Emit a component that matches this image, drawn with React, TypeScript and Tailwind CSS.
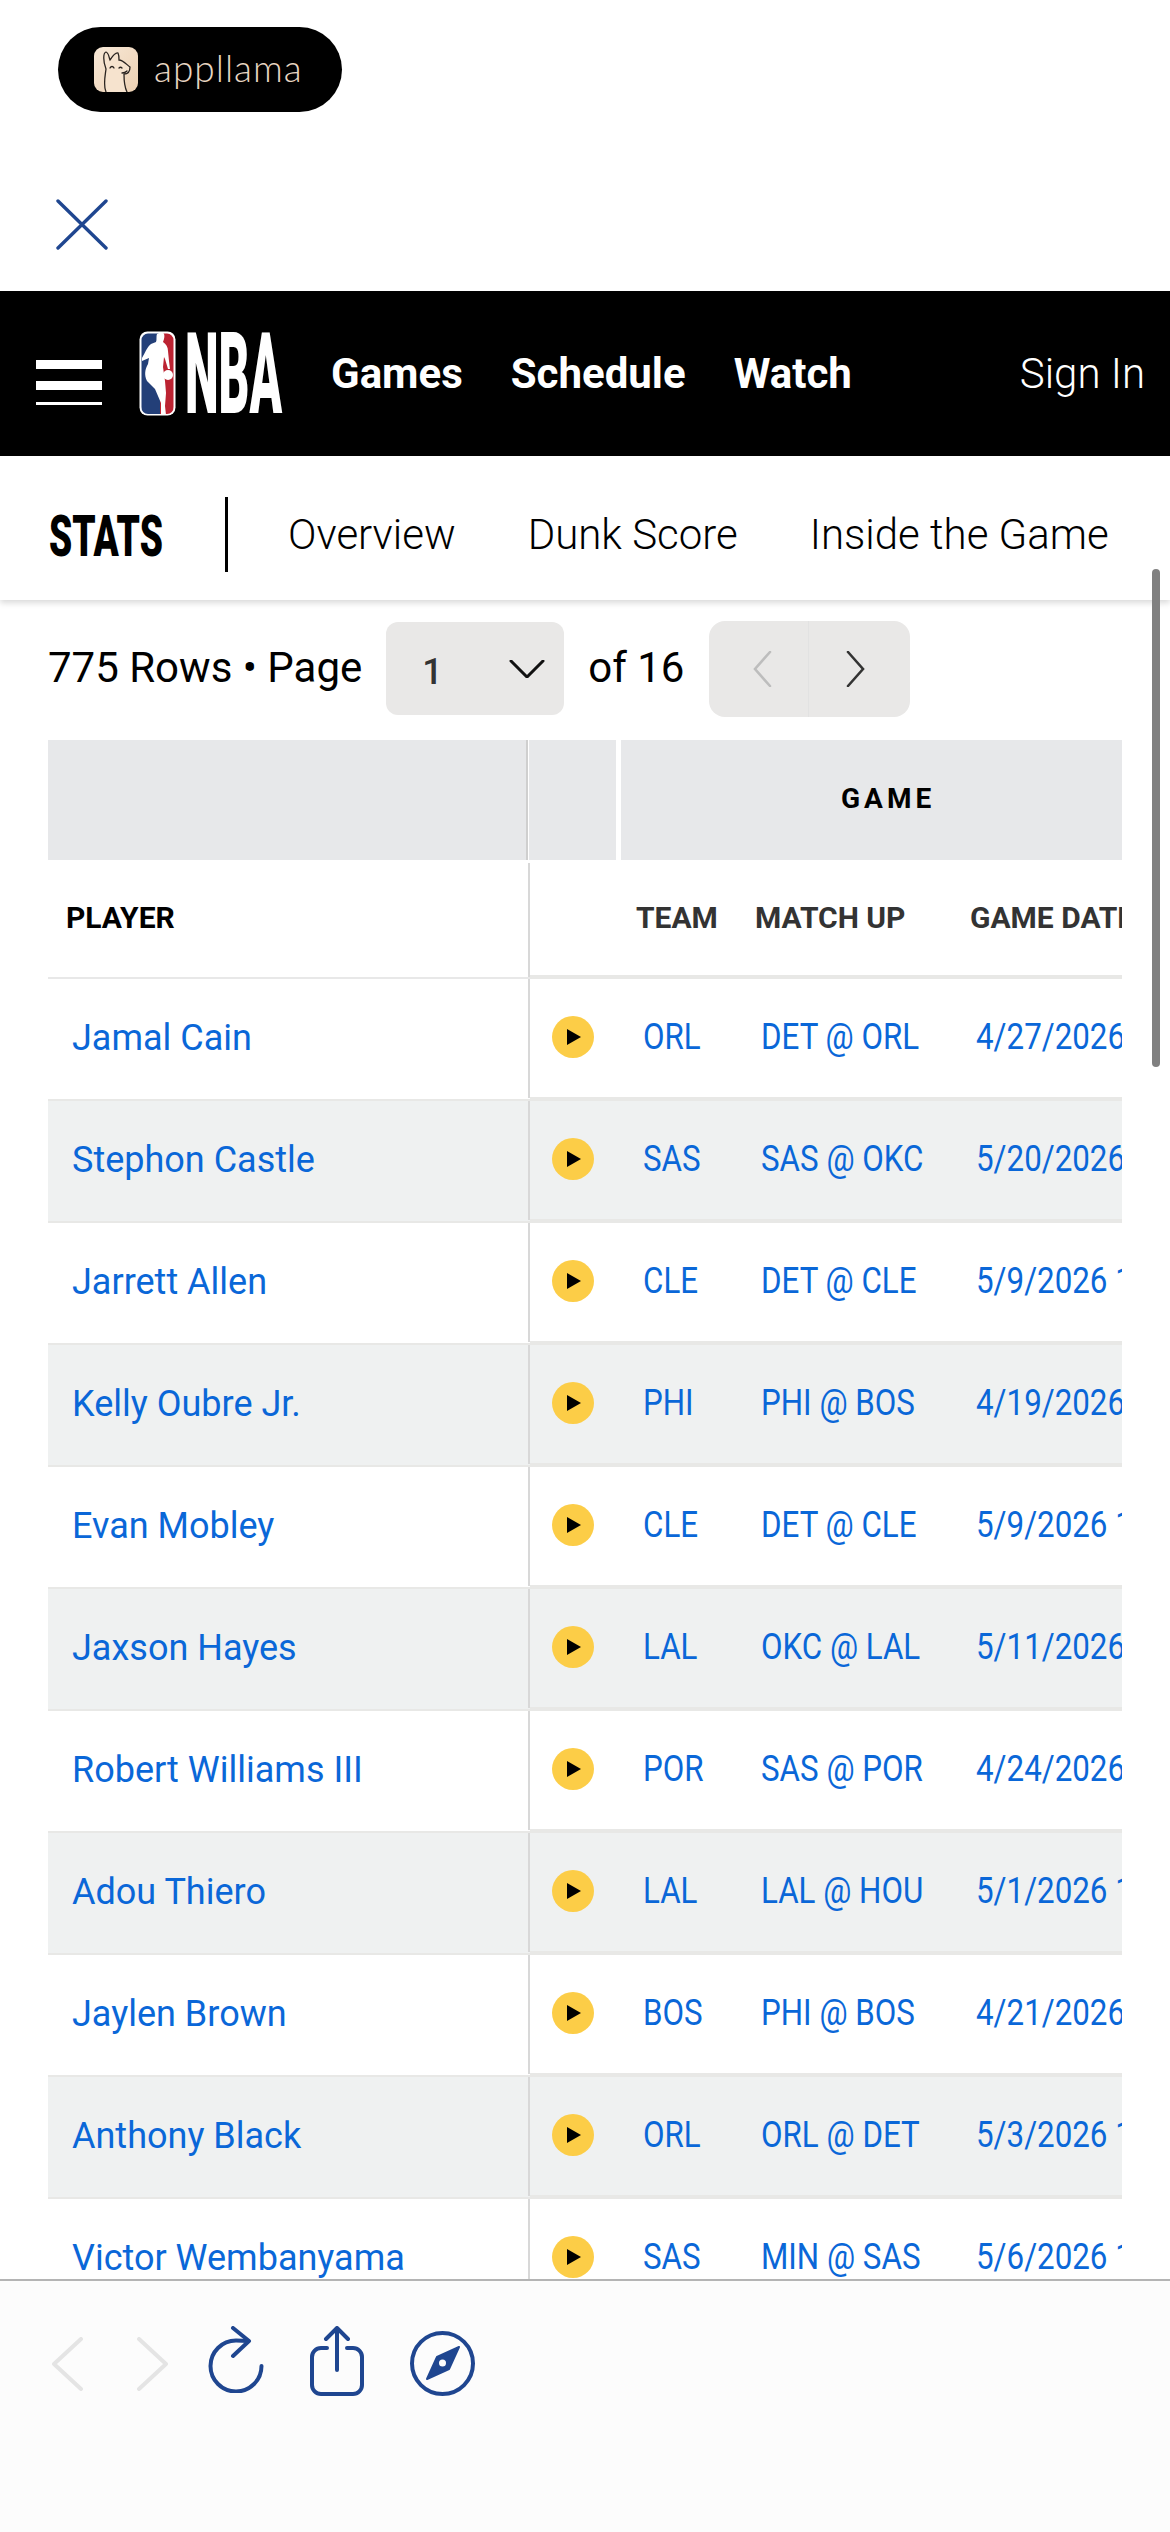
const rows = [
  ["Jamal Cain", "ORL", "DET @ ORL", "4/27/2026 7:30 PM"],
  ["Stephon Castle", "SAS", "SAS @ OKC", "5/20/2026 8:30 PM"],
  ["Jarrett Allen", "CLE", "DET @ CLE", "5/9/2026 1:00 PM"],
  ["Kelly Oubre Jr.", "PHI", "PHI @ BOS", "4/19/2026 6:00 PM"],
  ["Evan Mobley", "CLE", "DET @ CLE", "5/9/2026 1:00 PM"],
  ["Jaxson Hayes", "LAL", "OKC @ LAL", "5/11/2026 9:30 PM"],
  ["Robert Williams III", "POR", "SAS @ POR", "4/24/2026 9:00 PM"],
  ["Adou Thiero", "LAL", "LAL @ HOU", "5/1/2026 1:00 PM"],
  ["Jaylen Brown", "BOS", "PHI @ BOS", "4/21/2026 7:00 PM"],
  ["Anthony Black", "ORL", "ORL @ DET", "5/3/2026 1:00 PM"],
  ["Victor Wembanyama", "SAS", "MIN @ SAS", "5/6/2026 1:00 PM"],
];

function Llama() {
  return (
    <div className="w-[44px] h-[45px] rounded-[9px] bg-gradient-to-br from-[#f8e9d8] to-[#ecd0b2] overflow-hidden">
      <svg viewBox="0 0 44 45" className="w-full h-full" fill="none" stroke="#2a2420" strokeWidth="1.3" strokeLinecap="round">
        <path d="M12 45 C9 38 11 30 12 22 C9 14 9 6 12 5 C15 6 15 11 16 13 C18 10 21 5 24 6 C25 8 25 10 25 13 C29 13 33 18 36 20 C36 24 34 27 30 27 C30 32 30 39 33 45" fill="#f6e3ce" />
        <path d="M16 21 C17 19 19 19 20 21 M25 21 C26 20 27 20 28 21" />
        <path d="M28 26 C30 26 32 25 33 24" />
      </svg>
    </div>
  );
}

function NbaLogo() {
  return (
    <svg viewBox="0 0 37 85" className="w-[37px] h-[85px] shrink-0">
      <rect x="0.5" y="0.5" width="36" height="84" rx="8" fill="#fff" />
      <path d="M9 2.5 H21 V83 H9 A6.5 6.5 0 0 1 2.5 76 V9 A6.5 6.5 0 0 1 9 2.5 Z" fill="#233f78" />
      <path d="M21 2.5 H28 A6.5 6.5 0 0 1 34.5 9 V76 A6.5 6.5 0 0 1 28 83 H21 Z" fill="#bc2332" />
      <path d="M22 1 C25 1 26 4 25 8 L24 11 C27 13 29 16 29 20 L30 30 L31 38 L29 38 L26 28 L25 26 L24 36 L26 50 L27 62 L26 75 L27 84 L22 84 L22 72 L16 58 L8 50 C5 44 6 38 9 33 L10 27 L3 30 L3 27 C6 22 8 16 12 13 L17 11 C18 9 17 5 18 3 Z" fill="#fff" />
      <circle cx="29" cy="44" r="5" fill="#fff" />
    </svg>
  );
}

function PlayIcon() {
  return (
    <div className="w-[42px] h-[42px] rounded-full bg-[#fccd47] flex items-center justify-center ml-[22px]">
      <svg viewBox="0 0 14 16" className="w-[14px] h-[16px] ml-[1px]">
        <path d="M0 0 L14 8 L0 16 Z" fill="#000" />
      </svg>
    </div>
  );
}

function Squeezed({ children }: { children: string }) {
  return <span className="inline-block origin-left scale-x-[0.87] whitespace-nowrap">{children}</span>;
}

export default function App() {
  return (
    <div className="relative w-[1170px] h-[2532px] overflow-hidden bg-white flex flex-col font-['Roboto',sans-serif] text-black">
      {/* app banner */}
      <div className="h-[291px] shrink-0 pt-[27px]">
        <div className="ml-[58px] w-[284px] h-[85px] rounded-full bg-black flex items-center pl-[36px]">
          <Llama />
          <span className="ml-[16px] text-[37px] leading-none font-light font-['Lato',sans-serif] text-[#e8d6c2] tracking-[1px] pb-[4px]">
            appllama
          </span>
        </div>
        <svg viewBox="0 0 52 51" className="w-[52px] h-[51px] ml-[56px] mt-[87px]" fill="none" stroke="#1f4690" strokeWidth="3.4" strokeLinecap="round">
          <path d="M2 2 L50 49 M50 2 L2 49" />
        </svg>
      </div>

      {/* site header */}
      <header className="h-[165px] shrink-0 bg-black text-white flex items-center">
        <div className="ml-[36px] w-[66px] flex flex-col gap-[12px] mt-[18px]">
          <div className="h-[9px] bg-white" />
          <div className="h-[9px] bg-white" />
          <div className="h-[3px] bg-white" />
        </div>
        <div className="ml-[37px]">
          <NbaLogo />
        </div>
        <div className="w-[96px] ml-[9px] h-[81px] flex items-center">
          <span className="inline-block origin-left scale-x-[0.42] text-[114px] leading-none font-black whitespace-nowrap">NBA</span>
        </div>
        <nav className="flex items-center ml-[50px] gap-[48px] text-[42px] font-bold mt-[-1px]">
          <span>Games</span>
          <span>Schedule</span>
          <span>Watch</span>
        </nav>
        <span className="ml-auto mr-[25px] text-[42px] font-light mt-[-1px]">Sign In</span>
      </header>

      {/* stats nav */}
      <div className="h-[144px] shrink-0 bg-white flex items-center pt-[12px] shadow-[0_3px_6px_rgba(0,0,0,0.15)] z-10">
        <div className="ml-[49px] w-[176px] flex items-center mt-[4px]">
          <span className="inline-block origin-left scale-x-[0.64] text-[58px] leading-none font-black">STATS</span>
        </div>
        <div className="w-[3px] h-[75px] bg-black" />
        <div className="ml-[60px] flex items-center gap-[72px] text-[42px] font-light">
          <span>Overview</span>
          <span>Dunk Score</span>
          <span>Inside the Game</span>
        </div>
      </div>

      {/* pagination */}
      <div className="h-[140px] shrink-0 flex items-center pl-[48px] pb-[3px] text-[42px]">
        <span className="mb-[3px]">775 Rows • Page</span>
        <div className="ml-[24px] w-[178px] h-[93px] rounded-[12px] bg-[#e9e8e7] flex items-center justify-between pl-[36px] pr-[19px]">
          <span className="text-[#333] font-medium text-[36px] mt-[6px]">1</span>
          <svg viewBox="0 0 36 18" className="w-[36px] h-[18px]" fill="none" stroke="#111" strokeWidth="3" strokeLinecap="round">
            <path d="M2 1 L18 17 L34 1" />
          </svg>
        </div>
        <span className="ml-[24px] mb-[3px]">of 16</span>
        <div className="ml-[25px] w-[201px] h-[96px] rounded-[16px] bg-[#e9e8e7] flex items-center">
          <div className="w-[100px] h-full flex items-center justify-center border-r border-[#e2e2e2]">
            <svg viewBox="0 0 19 36" className="w-[19px] h-[36px] mr-[-8px]" fill="none" stroke="#bdbdbd" strokeWidth="2.6" strokeLinecap="round">
              <path d="M17 1 L2 18 L17 35" />
            </svg>
          </div>
          <div className="flex-1 h-full flex items-center justify-center">
            <svg viewBox="0 0 19 36" className="w-[19px] h-[36px] ml-[-8px]" fill="none" stroke="#333" strokeWidth="2.6" strokeLinecap="round">
              <path d="M2 1 L17 18 L2 35" />
            </svg>
          </div>
        </div>
      </div>

      {/* table */}
      <div className="flex-1 min-h-0 ml-[48px] w-[1074px] overflow-hidden">
        <div className="flex h-[120px]">
          <div className="w-[480px] bg-[#e7e8ea] border-r-2 border-[#cfcfcf] shrink-0" />
          <div className="w-[87px] ml-[1px] bg-[#e7e8ea] shrink-0" />
          <div className="flex-1 ml-[5px] bg-[#e7e8ea] flex items-center pl-[220px]">
            <span className="text-[28px] font-bold tracking-[4px] mt-[-2px]">GAME</span>
          </div>
        </div>
        <div className="flex h-[119px] text-[30px] font-bold">
          <div className="w-[482px] shrink-0 border-b-2 border-[#e8e8e8] pb-[3px]">
            <div className="h-full border-r-2 border-[#d8d8d8] flex items-center pl-[18px] mt-[3px]">
              <span className="mb-[6px]">PLAYER</span>
            </div>
          </div>
          <div className="flex-1 flex items-center border-b-4 border-[#e8e8e6] text-[#333] whitespace-nowrap">
            <div className="w-[106px]" />
            <div className="w-[119px]">TEAM</div>
            <div className="w-[215px]">MATCH UP</div>
            <div>GAME DATE</div>
          </div>
        </div>
        {rows.map((r, i) => (
          <div key={r[0]} className={`flex h-[122px] ${i % 2 === 1 ? "bg-[#eff1f1]" : "bg-white"}`}>
            <div className="w-[482px] shrink-0 border-b-2 border-[#e8e8e6] pb-[1px]">
              <div className="h-full border-r-2 border-[#d8d8d8] flex items-center pl-[24px] text-[36px] text-[#0a67d8]">
                <span className="mb-[2px]">{r[0]}</span>
              </div>
            </div>
            <div className="flex-1 flex items-center pb-[2px] border-b-4 border-[#e8e8e6] text-[36px] text-[#0a67d8] whitespace-nowrap">
              <div className="w-[106px]">
                <PlayIcon />
              </div>
              <div className="w-[119px] pl-[7px]">
                <Squeezed>{r[1]}</Squeezed>
              </div>
              <div className="w-[215px] pl-[6px]">
                <Squeezed>{r[2]}</Squeezed>
              </div>
              <div className="pl-[6px]">
                <Squeezed>{r[3]}</Squeezed>
              </div>
            </div>
          </div>
        ))}
      </div>

      {/* browser toolbar */}
      <div className="h-[253px] shrink-0 bg-[#fcfcfc] border-t-2 border-[#b4b4b4] flex items-start z-10">
        <svg viewBox="0 0 31 54" className="w-[31px] h-[54px] ml-[52px] mt-[56px]" fill="none" stroke="#e4e4e4" strokeWidth="4" strokeLinecap="round" strokeLinejoin="round">
          <path d="M29 2 L2 27 L29 52" />
        </svg>
        <svg viewBox="0 0 31 54" className="w-[31px] h-[54px] ml-[54px] mt-[56px]" fill="none" stroke="#e4e4e4" strokeWidth="4" strokeLinecap="round" strokeLinejoin="round">
          <path d="M2 2 L29 27 L2 52" />
        </svg>
        <svg viewBox="0 0 56 67" className="w-[56px] h-[67px] ml-[40px] mt-[45px]" fill="none" stroke="#1f4690" strokeWidth="4" strokeLinecap="round" strokeLinejoin="round">
          <path d="M53.5 40 A25.5 25.5 0 1 1 28 14.5 Q35 14.5 40 15" />
          <path d="M25 2 L41 15 L25 30" />
        </svg>
        <svg viewBox="0 0 56 71" className="w-[56px] h-[71px] ml-[45px] mt-[45px]" fill="none" stroke="#1f4690" strokeWidth="4" strokeLinecap="round" strokeLinejoin="round">
          <path d="M18 22 H12 A9 9 0 0 0 3 31 V59 A9 9 0 0 0 12 68 H44 A9 9 0 0 0 53 59 V31 A9 9 0 0 0 44 22 H38" />
          <path d="M28 44 V3 M17 13 L28 2 L39 13" />
        </svg>
        <svg viewBox="0 0 65 65" className="w-[65px] h-[65px] ml-[45px] mt-[50px]" fill="none">
          <circle cx="32.5" cy="32.5" r="30.5" stroke="#1f4690" strokeWidth="4" />
          <polygon points="49,16 27,26 17,48 39,38" fill="#1f4690" stroke="#1f4690" strokeWidth="2" strokeLinejoin="round" />
          <circle cx="32.5" cy="32" r="3.5" fill="#fcfcfc" />
        </svg>
      </div>

      {/* scroll indicator */}
      <div className="absolute left-[1152px] top-[569px] w-[8px] h-[498px] rounded-full bg-[#808080] z-20" />
    </div>
  );
}
